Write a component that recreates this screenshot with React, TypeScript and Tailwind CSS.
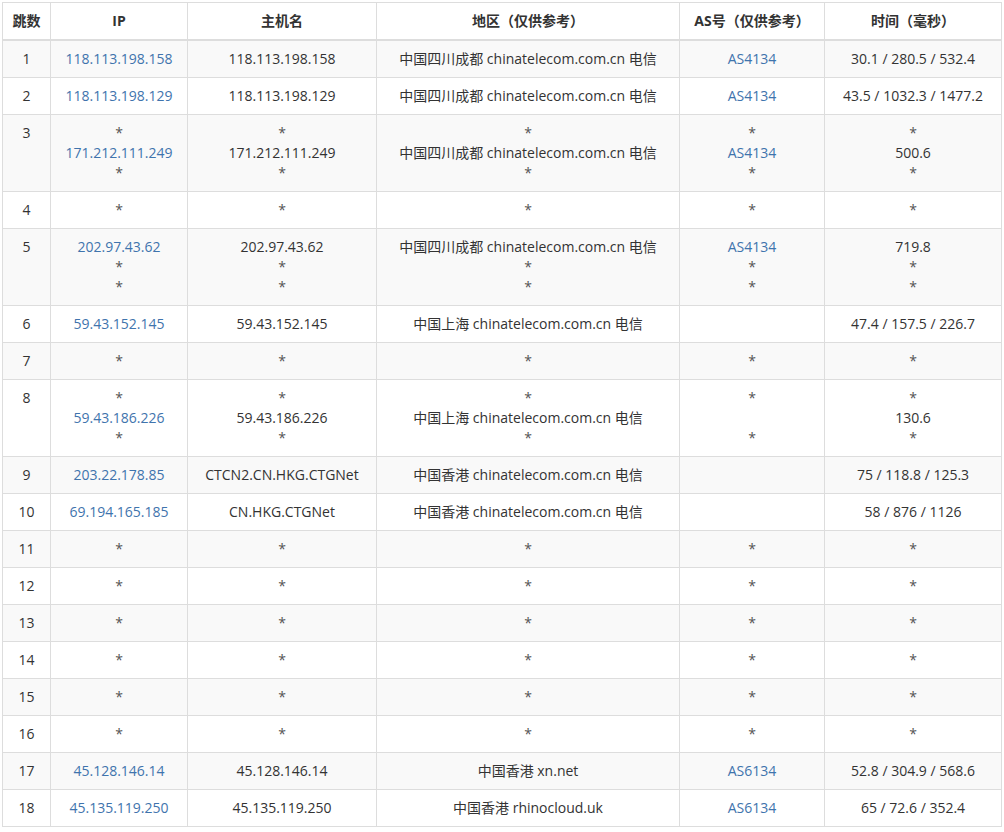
const rows: [string, string[], string[], string[], string[], string[]][] = [
  ["1", ["118.113.198.158"], ["118.113.198.158"], ["中国四川成都 chinatelecom.com.cn 电信"], ["AS4134"], ["30.1 / 280.5 / 532.4"]],
  ["2", ["118.113.198.129"], ["118.113.198.129"], ["中国四川成都 chinatelecom.com.cn 电信"], ["AS4134"], ["43.5 / 1032.3 / 1477.2"]],
  ["3", ["*", "171.212.111.249", "*"], ["*", "171.212.111.249", "*"], ["*", "中国四川成都 chinatelecom.com.cn 电信", "*"], ["*", "AS4134", "*"], ["*", "500.6", "*"]],
  ["4", ["*"], ["*"], ["*"], ["*"], ["*"]],
  ["5", ["202.97.43.62", "*", "*"], ["202.97.43.62", "*", "*"], ["中国四川成都 chinatelecom.com.cn 电信", "*", "*"], ["AS4134", "*", "*"], ["719.8", "*", "*"]],
  ["6", ["59.43.152.145"], ["59.43.152.145"], ["中国上海 chinatelecom.com.cn 电信"], [""], ["47.4 / 157.5 / 226.7"]],
  ["7", ["*"], ["*"], ["*"], ["*"], ["*"]],
  ["8", ["*", "59.43.186.226", "*"], ["*", "59.43.186.226", "*"], ["*", "中国上海 chinatelecom.com.cn 电信", "*"], ["*", "", "*"], ["*", "130.6", "*"]],
  ["9", ["203.22.178.85"], ["CTCN2.CN.HKG.CTGNet"], ["中国香港 chinatelecom.com.cn 电信"], [""], ["75 / 118.8 / 125.3"]],
  ["10", ["69.194.165.185"], ["CN.HKG.CTGNet"], ["中国香港 chinatelecom.com.cn 电信"], [""], ["58 / 876 / 1126"]],
  ...["11", "12", "13", "14", "15", "16"].map(
    (n) => [n, ["*"], ["*"], ["*"], ["*"], ["*"]] as [string, string[], string[], string[], string[], string[]]
  ),
  ["17", ["45.128.146.14"], ["45.128.146.14"], ["中国香港 xn.net"], ["AS6134"], ["52.8 / 304.9 / 568.6"]],
  ["18", ["45.135.119.250"], ["45.135.119.250"], ["中国香港 rhinocloud.uk"], ["AS6134"], ["65 / 72.6 / 352.4"]],
];

function Lines({ items, link }: { items: string[]; link?: boolean }) {
  return (
    <>
      {items.map((t, i) => (
        <div
          key={i}
          className={"h-5 " + (t === "*" ? "text-[#555555]" : link ? "text-[#3f74ad]" : "")}
        >
          {t}
        </div>
      ))}
    </>
  );
}

export default function App() {
  const td = "border border-[#dddddd] px-2 py-2 align-top text-center";
  return (
    <div
      className="bg-white p-[2px] text-[14px] leading-5 text-[#333333]"
      style={{ fontFamily: '"Open Sans","Noto Sans CJK SC",sans-serif' }}
    >
      <table className="w-[999px] border-collapse table-fixed">
        <colgroup>
          <col className="w-[48px]" />
          <col className="w-[137px]" />
          <col className="w-[189px]" />
          <col className="w-[303px]" />
          <col className="w-[145px]" />
          <col className="w-[177px]" />
        </colgroup>
        <thead>
          <tr>
            {["跳数", "IP", "主机名", "地区（仅供参考）", "AS号（仅供参考）", "时间（毫秒）"].map((h) => (
              <th key={h} className="border border-[#dddddd] border-b-2 px-2 py-2 text-center font-bold">
                {h}
              </th>
            ))}
          </tr>
        </thead>
        <tbody>
          {rows.map((r, i) => (
            <tr key={r[0]} className={i % 2 === 0 ? "bg-[#f9f9f9]" : "bg-white"}>
              <td className={td}>{r[0]}</td>
              <td className={td}><Lines items={r[1]} link /></td>
              <td className={td}><Lines items={r[2]} /></td>
              <td className={td}><Lines items={r[3]} /></td>
              <td className={td}><Lines items={r[4]} link /></td>
              <td className={td}><Lines items={r[5]} /></td>
            </tr>
          ))}
        </tbody>
      </table>
    </div>
  );
}
